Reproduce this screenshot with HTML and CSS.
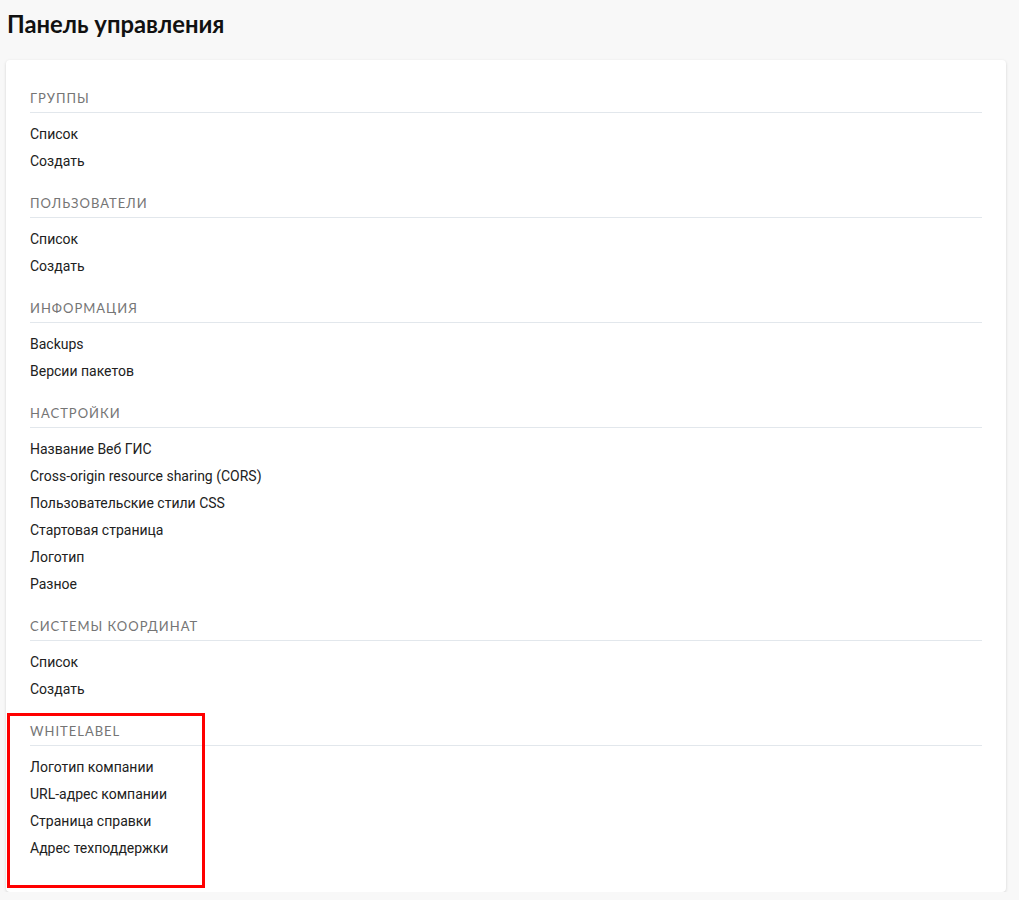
FILE: index.html
```html
<!DOCTYPE html>
<html lang="ru">
<head>
<meta charset="utf-8">
<title>Панель управления</title>
<link rel="stylesheet" href="styles.css">
</head>
<body>
<div class="page">
  <h1 class="title">Панель управления</h1>
  <div class="card">
    <section class="section">
      <h2 class="section-title">Группы</h2>
      <ul class="links">
        <li><a href="#">Список</a></li>
        <li><a href="#">Создать</a></li>
      </ul>
    </section>
    <section class="section">
      <h2 class="section-title">Пользователи</h2>
      <ul class="links">
        <li><a href="#">Список</a></li>
        <li><a href="#">Создать</a></li>
      </ul>
    </section>
    <section class="section">
      <h2 class="section-title">Информация</h2>
      <ul class="links">
        <li><a href="#">Backups</a></li>
        <li><a href="#">Версии пакетов</a></li>
      </ul>
    </section>
    <section class="section">
      <h2 class="section-title">Настройки</h2>
      <ul class="links">
        <li><a href="#">Название Веб ГИС</a></li>
        <li><a href="#">Cross-origin resource sharing (CORS)</a></li>
        <li><a href="#">Пользовательские стили CSS</a></li>
        <li><a href="#">Стартовая страница</a></li>
        <li><a href="#">Логотип</a></li>
        <li><a href="#">Разное</a></li>
      </ul>
    </section>
    <section class="section">
      <h2 class="section-title">Системы координат</h2>
      <ul class="links">
        <li><a href="#">Список</a></li>
        <li><a href="#">Создать</a></li>
      </ul>
    </section>
    <section class="section">
      <h2 class="section-title">Whitelabel</h2>
      <ul class="links">
        <li><a href="#">Логотип компании</a></li>
        <li><a href="#">URL-адрес компании</a></li>
        <li><a href="#">Страница справки</a></li>
        <li><a href="#">Адрес техподдержки</a></li>
      </ul>
    </section>
    <div class="highlight"></div>
  </div>
</div>
</body>
</html>
```
FILE: styles.css
```css
html, body {
  margin: 0;
  padding: 0;
  background: #f8f8f8;
}
body {
  font-family: Roboto, "Noto Sans", sans-serif;
  color: #212121;
}
.page {
  padding: 0 13px 0 6px;
}
.title {
  margin: 0;
  padding: 10px 0 0 1px;
  height: 60px;
  box-sizing: border-box;
  font-family: Lato, "Noto Sans", sans-serif;
  font-weight: 700;
  font-size: 23.8px;
  line-height: 28px;
  color: #111;
}
.card {
  position: relative;
  background: #fff;
  border-radius: 4px;
  box-shadow: 0 1px 3px rgba(0,0,0,0.16);
  padding: 28px 24px 12px;
}
.section {
  margin-bottom: 18px;
}
.section-title {
  margin: 0;
  font-family: Lato, "Noto Sans", sans-serif;
  font-weight: 400;
  font-size: 13px;
  line-height: 20px;
  letter-spacing: 1px;
  text-transform: uppercase;
  color: #757575;
  padding-bottom: 4px;
  border-bottom: 1px solid #e2e7ec;
}
.links {
  list-style: none;
  margin: 8px 0 0;
  padding: 0;
}
.links li {
  font-size: 14px;
  line-height: 27px;
}
.links a {
  color: #212121;
  text-decoration: none;
}
.highlight {
  position: absolute;
  left: 1px;
  top: 653px;
  width: 192px;
  height: 169px;
  border: 3px solid #ff0000;
  pointer-events: none;
}
```
